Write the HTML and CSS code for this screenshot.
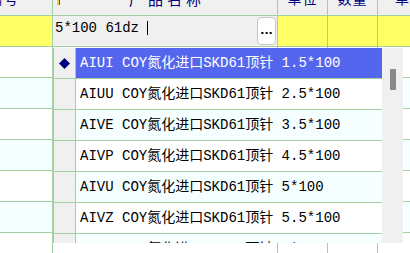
FILE: index.html
```html
<!DOCTYPE html>
<html lang="zh-CN">
<head>
    <meta charset="UTF-8">
    <title>产品录入</title>
    <link rel="stylesheet" href="styles.css">
</head>
<body>
    <div class="grid">
        <div class="row head">
            <div class="cell c1"><span class="htext code">编号</span></div>
            <div class="cell c2"><span class="sort-mark"></span><span class="htext name">产品名称</span></div>
            <div class="cell c3"><span class="htext">单位</span></div>
            <div class="cell c4"><span class="htext">数量</span></div>
            <div class="cell c5"><span class="htext last">单价</span></div>
        </div>
        <div class="row editing">
            <div class="cell c1"></div>
            <div class="cell c2 edit-cell">
                <span class="edit-text">5*100 61dz</span><span class="caret"></span>
                <button class="pick-btn">...</button>
            </div>
            <div class="cell c3"></div>
            <div class="cell c4"></div>
            <div class="cell c5"></div>
        </div>
        <div class="row"><div class="cell c1"></div><div class="cell c2"></div><div class="cell c3"></div><div class="cell c4"></div><div class="cell c5"></div></div>
        <div class="row alt"><div class="cell c1"></div><div class="cell c2"></div><div class="cell c3"></div><div class="cell c4"></div><div class="cell c5"></div></div>
        <div class="row"><div class="cell c1"></div><div class="cell c2"></div><div class="cell c3"></div><div class="cell c4"></div><div class="cell c5"></div></div>
        <div class="row alt"><div class="cell c1"></div><div class="cell c2"></div><div class="cell c3"></div><div class="cell c4"></div><div class="cell c5"></div></div>
        <div class="row"><div class="cell c1"></div><div class="cell c2"></div><div class="cell c3"></div><div class="cell c4"></div><div class="cell c5"></div></div>
        <div class="row alt"><div class="cell c1"></div><div class="cell c2"></div><div class="cell c3"></div><div class="cell c4"></div><div class="cell c5"></div></div>
        <div class="row"><div class="cell c1"></div><div class="cell c2"></div><div class="cell c3"></div><div class="cell c4"></div><div class="cell c5"></div></div>
    </div>

    <div class="dropdown">
        <div class="drop-list">
            <div class="drop-row selected">
                <div class="indicator">
                    <svg width="11" height="11" viewBox="0 0 11 11"><polygon points="5.5,0 11,5.5 5.5,11 0,5.5" fill="#000080"/></svg>
                </div>
                <div class="drop-text">AIUI COY氮化进口SKD61顶针 1.5*100</div>
            </div>
            <div class="drop-row">
                <div class="indicator"></div>
                <div class="drop-text">AIUU COY氮化进口SKD61顶针 2.5*100</div>
            </div>
            <div class="drop-row alt">
                <div class="indicator"></div>
                <div class="drop-text">AIVE COY氮化进口SKD61顶针 3.5*100</div>
            </div>
            <div class="drop-row">
                <div class="indicator"></div>
                <div class="drop-text">AIVP COY氮化进口SKD61顶针 4.5*100</div>
            </div>
            <div class="drop-row alt">
                <div class="indicator"></div>
                <div class="drop-text">AIVU COY氮化进口SKD61顶针 5*100</div>
            </div>
            <div class="drop-row">
                <div class="indicator"></div>
                <div class="drop-text">AIVZ COY氮化进口SKD61顶针 5.5*100</div>
            </div>
            <div class="drop-row alt">
                <div class="indicator"></div>
                <div class="drop-text">AIWA COY氮化进口SKD61顶针 6*100</div>
            </div>
        </div>
        <div class="scrollbar">
            <div class="thumb"></div>
        </div>
    </div>
</body>
</html>
```

FILE: styles.css
```css
body {
    margin: 0;
    padding: 0;
    width: 410px;
    height: 253px;
    overflow: hidden;
    background: #ffffff;
    font-family: 'Liberation Mono', 'Noto Sans CJK SC', monospace;
    font-size: 14px;
    color: #000000;
    position: relative;
}

.grid {
    width: 410px;
}

.row {
    display: flex;
    height: 30px;
    border-bottom: 1px solid #a3d0a3;
    background: #ffffff;
}

.row.alt {
    background: #f5ffff;
}

.cell {
    height: 100%;
    border-right: 1px solid #a3d0a3;
    box-sizing: content-box;
    position: relative;
    overflow: hidden;
}

.c1 { width: 52px; }
.c2 { width: 224px; }
.c3 { width: 49px; }
.c4 { width: 49px; }
.c5 { flex: 1; border-right: none; }

.head {
    height: 15px;
    background: #f0f0f0;
}

.htext {
    display: block;
    margin-top: -9px;
    line-height: 15px;
    font-family: 'Noto Sans CJK SC', sans-serif;
    font-size: 14px;
    color: #000080;
    text-align: center;
    letter-spacing: 1px;
    white-space: nowrap;
}

.htext.code {
    text-align: left;
    margin-left: -12px;
    letter-spacing: 2px;
}

.htext.name {
    font-size: 15px;
    letter-spacing: 4px;
    padding-left: 4px;
}

.htext.last {
    text-align: left;
    padding-left: 17px;
}

.sort-mark {
    position: absolute;
    left: 4px;
    top: 0;
    width: 2px;
    height: 5px;
    background: #e8d040;
    border-right: 1px solid #3050a0;
}

.editing {
    height: 30px;
    background: #ffff66;
}

.edit-cell {
    background: #f0f0f0;
    display: flex;
    align-items: flex-start;
    padding-top: 3px;
    height: 27px;
}

.edit-text {
    margin-left: 2px;
    line-height: 18px;
    white-space: pre;
}

.caret {
    display: inline-block;
    width: 1px;
    height: 14px;
    margin-top: 2px;
    margin-left: 8px;
    background: #000000;
}

.pick-btn {
    margin-left: auto;
    margin-top: -2px;
    margin-right: 1px;
    width: 19px;
    height: 28px;
    padding: 0;
    background: #ffffff;
    border: 1px solid #c8c8c8;
    border-radius: 4px;
    font-family: 'DejaVu Sans', sans-serif;
    font-size: 11px;
    font-weight: bold;
    line-height: 20px;
    color: #000000;
}

.dropdown {
    position: absolute;
    left: 53px;
    top: 48px;
    width: 349px;
    height: 195px;
    display: flex;
    overflow: hidden;
    border-left: 1px solid #a3d0a3;
    background: #ffffff;
}

.drop-list {
    width: 328px;
}

.drop-row {
    display: flex;
    height: 30px;
    border-bottom: 1px solid #a3d0a3;
    background: #ffffff;
}

.drop-row.alt {
    background: #f5ffff;
}

.indicator {
    width: 21px;
    border-right: 1px solid #a3d0a3;
    background: #f0f0f0;
    display: flex;
    align-items: center;
    justify-content: center;
}

.drop-text {
    flex: 1;
    padding-left: 4px;
    line-height: 31px;
    white-space: nowrap;
    overflow: hidden;
}

.drop-row.selected .drop-text {
    background: #5566ee;
    color: #ffffff;
}

.scrollbar {
    width: 21px;
    background: #f0f0f0;
    position: relative;
}

.thumb {
    margin: 21px 0 0 8px;
    width: 6px;
    height: 21px;
    background: #888888;
    border-radius: 1px;
}
```
